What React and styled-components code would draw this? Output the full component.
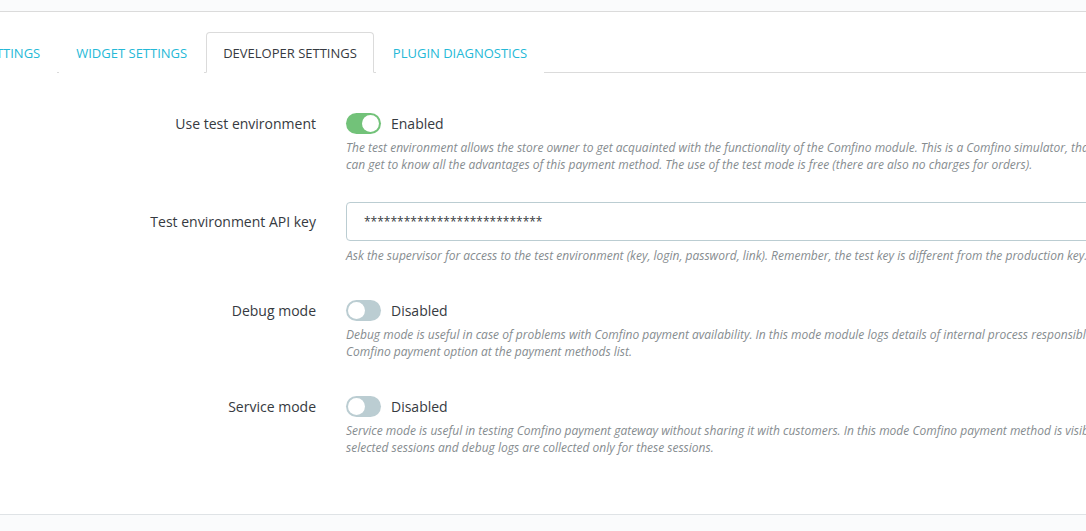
import React from "react";
import styled, { createGlobalStyle } from "styled-components";

const GlobalStyle = createGlobalStyle`
  html, body {
    margin: 0;
    padding: 0;
    background: #fafbfc;
    overflow: hidden;
  }
  body {
    font-family: "Open Sans", "Liberation Sans", sans-serif;
    color: #363a41;
  }
`;

const Page = styled.div`
  width: 1086px;
  height: 531px;
  overflow: hidden;
  background: #fafbfc;
`;

const TopStrip = styled.div`
  height: 11px;
  border-bottom: 1px solid #dbdbdb;
  background: #fafbfc;
`;

const Panel = styled.div`
  background: #fff;
  padding-top: 20px;
  height: 503px;
  box-sizing: border-box;
  border-bottom: 1px solid #dfe3e6;
`;

const TabBar = styled.ul`
  display: flex;
  list-style: none;
  margin: 0;
  padding: 0;
  border-bottom: 1px solid #dbdbdb;
  white-space: nowrap;
`;

const Tabs = styled.div`
  display: flex;
  gap: 2px;
  margin-left: ${(p) => p.offset}px;
`;

const Tab = styled.li`
  display: flex;
  align-items: center;
  height: 39px;
  padding: 0 16px;
  margin-bottom: -1px;
  font-size: 13px;
  text-transform: uppercase;
  color: ${(p) => (p.active ? "#363a41" : "#25b9d7")};
  background: #fff;
  border: 1px solid ${(p) => (p.active ? "#dbdbdb" : "transparent")};
  border-bottom-color: ${(p) => (p.active ? "#fff" : "transparent")};
  border-radius: 4px 4px 0 0;
`;

const Form = styled.div`
  padding-top: 40px;
`;

const Row = styled.div`
  display: grid;
  grid-template-columns: 316px 1200px;
  column-gap: 30px;
  margin-bottom: ${(p) => p.space}px;
`;

const Label = styled.div`
  text-align: right;
  font-size: 14px;
  line-height: 22px;
  height: ${(p) => p.h}px;
  display: flex;
  align-items: center;
  justify-content: flex-end;
`;

const ControlLine = styled.div`
  display: flex;
  align-items: center;
  gap: 10px;
  height: ${(p) => p.h}px;
`;

const Switch = styled.span`
  position: relative;
  width: 35px;
  height: 21px;
  border-radius: 11px;
  background: ${(p) => (p.on ? "#72c279" : "#bbcdd2")};
  flex-shrink: 0;

  &::after {
    content: "";
    position: absolute;
    top: 2px;
    left: ${(p) => (p.on ? "16px" : "2px")};
    width: 17px;
    height: 17px;
    border-radius: 50%;
    background: #fff;
  }
`;

const Status = styled.span`
  font-size: 14px;
  color: #363a41;
`;

const Input = styled.div`
  width: 1000px;
  height: 39px;
  box-sizing: border-box;
  border: 1px solid #bbcdd2;
  border-radius: 4px;
  padding: 0 17px;
  display: flex;
  align-items: center;
  font-size: 12px;
  color: #363a41;
`;

const Help = styled.div`
  margin-top: ${(p) => p.gap}px;
  font-size: 12px;
  line-height: 17px;
  font-style: italic;
  color: #868c8f;
  white-space: nowrap;
`;

const rows = [
  {
    label: "Use test environment",
    type: "switch",
    on: true,
    space: 29,
    help: [
      "The test environment allows the store owner to get acquainted with the functionality of the Comfino module. This is a Comfino simulator, thanks to which you",
      "can get to know all the advantages of this payment method. The use of the test mode is free (there are also no charges for orders).",
    ],
  },
  {
    label: "Test environment API key",
    type: "input",
    value: "***************************",
    space: 36,
    help: [
      "Ask the supervisor for access to the test environment (key, login, password, link). Remember, the test key is different from the production key.",
    ],
  },
  {
    label: "Debug mode",
    type: "switch",
    on: false,
    space: 36,
    help: [
      "Debug mode is useful in case of problems with Comfino payment availability. In this mode module logs details of internal process responsible for displaying of",
      "Comfino payment option at the payment methods list.",
    ],
  },
  {
    label: "Service mode",
    type: "switch",
    on: false,
    space: 0,
    help: [
      "Service mode is useful in testing Comfino payment gateway without sharing it with customers. In this mode Comfino payment method is visible only for",
      "selected sessions and debug logs are collected only for these sessions.",
    ],
  },
];

const tabs = ["Payment settings", "Widget settings", "Developer settings", "Plugin diagnostics"];

export default function App() {
  return (
    <Page>
      <GlobalStyle />
      <TopStrip />
      <Panel>
        <TabBar>
          <Tabs offset={-98}>
            {tabs.map((t) => (
              <Tab key={t} active={t === "Developer settings"}>
                {t}
              </Tab>
            ))}
          </Tabs>
        </TabBar>
        <Form>
          {rows.map((r) => {
            const h = r.type === "input" ? 39 : 21;
            return (
              <Row key={r.label} space={r.space}>
                <Label h={h}>{r.label}</Label>
                <div>
                  <ControlLine h={h}>
                    {r.type === "switch" ? (
                      <>
                        <Switch on={r.on ? 1 : 0} />
                        <Status>{r.on ? "Enabled" : "Disabled"}</Status>
                      </>
                    ) : (
                      <Input>{r.value}</Input>
                    )}
                  </ControlLine>
                  <Help gap={r.type === "input" ? 6 : 5}>
                    {r.help.map((l) => (
                      <div key={l}>{l}</div>
                    ))}
                  </Help>
                </div>
              </Row>
            );
          })}
        </Form>
      </Panel>
    </Page>
  );
}
